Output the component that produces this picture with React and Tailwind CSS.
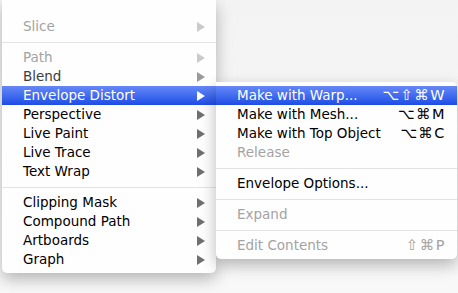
import React from 'react';

const mainItems = [
    { label: 'Slice', state: 'off' },
    { sep: true },
    { label: 'Path', state: 'off' },
    { label: 'Blend', state: 'dim' },
    { label: 'Envelope Distort', state: 'on' },
    { label: 'Perspective' },
    { label: 'Live Paint' },
    { label: 'Live Trace' },
    { label: 'Text Wrap' },
    { sep: true },
    { label: 'Clipping Mask' },
    { label: 'Compound Path' },
    { label: 'Artboards' },
    { label: 'Graph' },
];

const subItems = [
    { label: 'Make with Warp...', keys: '⌥⇧⌘W', state: 'on' },
    { label: 'Make with Mesh...', keys: '⌥⌘M' },
    { label: 'Make with Top Object', keys: '⌥⌘C' },
    { label: 'Release', state: 'off' },
    { sep: true },
    { label: 'Envelope Options...' },
    { sep: true },
    { label: 'Expand', state: 'off' },
    { sep: true },
    { label: 'Edit Contents', keys: '⇧⌘P', state: 'off' },
];

const textColor = {
    on: 'text-white',
    off: 'text-[#a3a3a3]',
    dim: 'text-[#3c3c3c]',
};

const arrowColor = {
    on: 'fill-white',
    off: 'fill-[#cbcbcb]',
    dim: 'fill-[#9a9a9a]',
};

const Arrow = ({ state }) => (
    <svg width="8" height="10" viewBox="0 0 8 10" className={arrowColor[state] || 'fill-[#6f6f6f]'}>
        <path d="M0 0 L8 5 L0 10 Z" />
    </svg>
);

const Separator = () => (
    <div className="h-[12px] flex items-center">
        <div className="w-full h-px bg-[#e3e3e3]" />
    </div>
);

const rowBg = (state) =>
    state === 'on' ? 'bg-gradient-to-b from-[#6687f7] to-[#1d4ce6]' : '';

const App = () => {
    return (
        <div
            className="w-[458px] h-[293px] overflow-hidden bg-gradient-to-b from-[#f3f3f3] to-[#f8f8f8] flex items-start pl-[2px]"
            style={{ fontFamily: '"DejaVu Sans", "Liberation Sans", sans-serif' }}
        >
            {/* main menu */}
            <div className="w-[214px] pt-[17px] pb-[4px] bg-[#fefefe] rounded-b-[5px] shadow-[0_6px_16px_rgba(0,0,0,0.28)] relative z-0">
                {mainItems.map((item, i) =>
                    item.sep ? (
                        <Separator key={i} />
                    ) : (
                        <div
                            key={i}
                            className={`h-[19px] flex items-center justify-between pl-[21px] pr-[11px] text-[13.5px] leading-none ${rowBg(item.state)} ${textColor[item.state] || 'text-black'}`}
                        >
                            <span>{item.label}</span>
                            <Arrow state={item.state} />
                        </div>
                    )
                )}
            </div>

            {/* submenu */}
            <div className="mt-[82px] w-[241px] pt-[4px] pb-[4px] bg-[#fefefe] rounded-b-[5px] rounded-tr-[5px] shadow-[0_6px_16px_rgba(0,0,0,0.28)] relative z-10">
                {subItems.map((item, i) =>
                    item.sep ? (
                        <Separator key={i} />
                    ) : (
                        <div
                            key={i}
                            className={`h-[19px] flex items-center justify-between pl-[21px] pr-[11px] text-[13.5px] leading-none ${rowBg(item.state)} ${textColor[item.state] || 'text-black'}`}
                        >
                            <span>{item.label}</span>
                            {item.keys && <span className="text-[14.5px] tracking-[1.5px]">{item.keys}</span>}
                        </div>
                    )
                )}
            </div>
        </div>
    );
};

export default App;
